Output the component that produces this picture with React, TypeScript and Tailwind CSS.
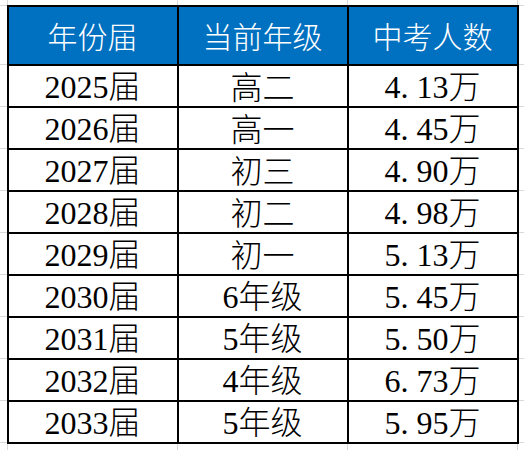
import React from 'react';

const rows = [
  { year: '2025', grade: '高二', count: '4.13' },
  { year: '2026', grade: '高一', count: '4.45' },
  { year: '2027', grade: '初三', count: '4.90' },
  { year: '2028', grade: '初二', count: '4.98' },
  { year: '2029', grade: '初一', count: '5.13' },
  { year: '2030', grade: '6年级', count: '5.45' },
  { year: '2031', grade: '5年级', count: '5.50' },
  { year: '2032', grade: '4年级', count: '6.73' },
  { year: '2033', grade: '5年级', count: '5.95' },
];

const serif = { fontFamily: '"Liberation Serif", "DejaVu Serif", serif' };
const cjk = { fontFamily: '"Noto Sans CJK SC", sans-serif' };

// digits in serif, CJK in sans, like the sheet's mixed rendering
function Mixed({ text }: { text: string }) {
  const parts = text.match(/[0-9.]+|[^0-9.]+/g) || [];
  return (
    <>
      {parts.map((p, i) =>
        /[0-9.]/.test(p) ? (
          <span key={i} style={serif}>
            {p.split('').map((ch, j) =>
              ch === '.' ? (
                <span key={j} className="inline-block w-[0.5em] text-left">
                  .
                </span>
              ) : (
                ch
              )
            )}
          </span>
        ) : (
          <span key={i} className="font-light" style={cjk}>
            {p}
          </span>
        )
      )}
    </>
  );
}

export default function App() {
  const margin = 'border border-[#d9d9d9] p-0';
  const cell = 'border-2 border-black p-0 text-center';
  const body = `${cell} text-[32px] leading-none text-black whitespace-nowrap`;

  return (
    <div className="w-[524px] h-[450px] bg-white overflow-hidden">
      <table className="border-collapse table-fixed w-[526px] -ml-[1px] -mt-[1px]">
        <colgroup>
          <col className="w-[8px]" />
          <col className="w-[170px]" />
          <col className="w-[170px]" />
          <col className="w-[170px]" />
          <col className="w-[8px]" />
        </colgroup>
        <tbody>
          <tr className="h-[6px]">
            <td className={margin} />
            <td className={margin} />
            <td className={margin} />
            <td className={margin} />
            <td className={margin} />
          </tr>
          <tr className="h-[59px]">
            <td className={margin} />
            {['年份届', '当前年级', '中考人数'].map((h) => (
              <td
                key={h}
                className={`${cell} bg-[#0070c0] text-white text-[30px] leading-none font-light`}
                style={cjk}
              >
                {h}
              </td>
            ))}
            <td className={margin} />
          </tr>
          {rows.map((r) => (
            <tr key={r.year} className="h-[42px]">
              <td className={margin} />
              <td className={body}>
                <Mixed text={`${r.year}届`} />
              </td>
              <td className={body}>
                <Mixed text={r.grade} />
              </td>
              <td className={body}>
                <Mixed text={`${r.count}万`} />
              </td>
              <td className={margin} />
            </tr>
          ))}
          <tr className="h-[20px]">
            <td className={margin} />
            <td className={margin} />
            <td className={margin} />
            <td className={margin} />
            <td className={margin} />
          </tr>
        </tbody>
      </table>
    </div>
  );
}
